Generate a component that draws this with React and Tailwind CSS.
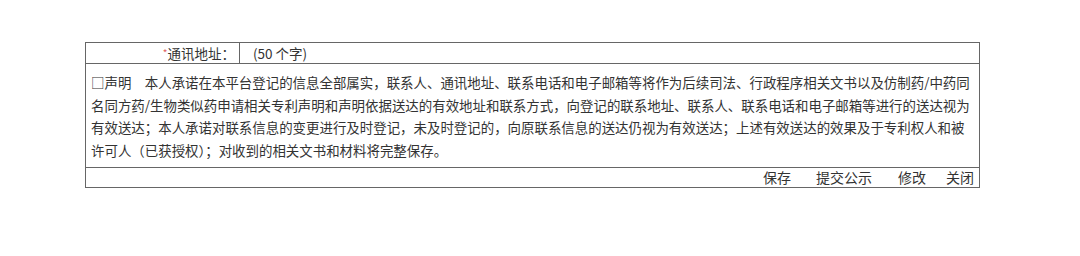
export default function App() {
  const lines = [
    '□声明　本人承诺在本平台登记的信息全部属实，联系人、通讯地址、联系电话和电子邮箱等将作为后续司法、行政程序相关文书以及仿制药/中药同',
    '名同方药/生物类似药申请相关专利声明和声明依据送达的有效地址和联系方式，向登记的联系地址、联系人、联系电话和电子邮箱等进行的送达视为',
    '有效送达；本人承诺对联系信息的变更进行及时登记，未及时登记的，向原联系信息的送达仍视为有效送达；上述有效送达的效果及于专利权人和被',
    '许可人（已获授权）；对收到的相关文书和材料将完整保存。',
  ]

  return (
    <div
      className="w-[1080px] h-[256px] bg-white pt-[42px] pl-[85px] text-[#333]"
      style={{ fontFamily: '"Noto Sans CJK SC", "Noto Sans", sans-serif' }}
    >
      <div className="w-[895px] border border-[#666]">
        <div className="flex h-[21px] border-b border-[#666] text-[13.5px] leading-[20px]">
          <div className="w-[154px] border-r border-[#666] text-right pr-[4px]">
            <span className="text-[#e06060] text-[10px] align-top">*</span>通讯地址：
          </div>
          <div className="pl-[13px]">(50 个字)</div>
        </div>
        <div className="h-[104px] border-b border-[#666] pl-[5px] pt-[7px] text-[13.45px] leading-[22.6px] whitespace-nowrap">
          {lines.map((l, i) => (
            <div key={i}>{l}</div>
          ))}
        </div>
        <div className="flex justify-end h-[19px] pr-[5px] text-[14px] leading-[19px]">
          <span>保存</span>
          <span className="ml-[25px]">提交公示</span>
          <span className="ml-[26px]">修改</span>
          <span className="ml-[20px]">关闭</span>
        </div>
      </div>
    </div>
  )
}
